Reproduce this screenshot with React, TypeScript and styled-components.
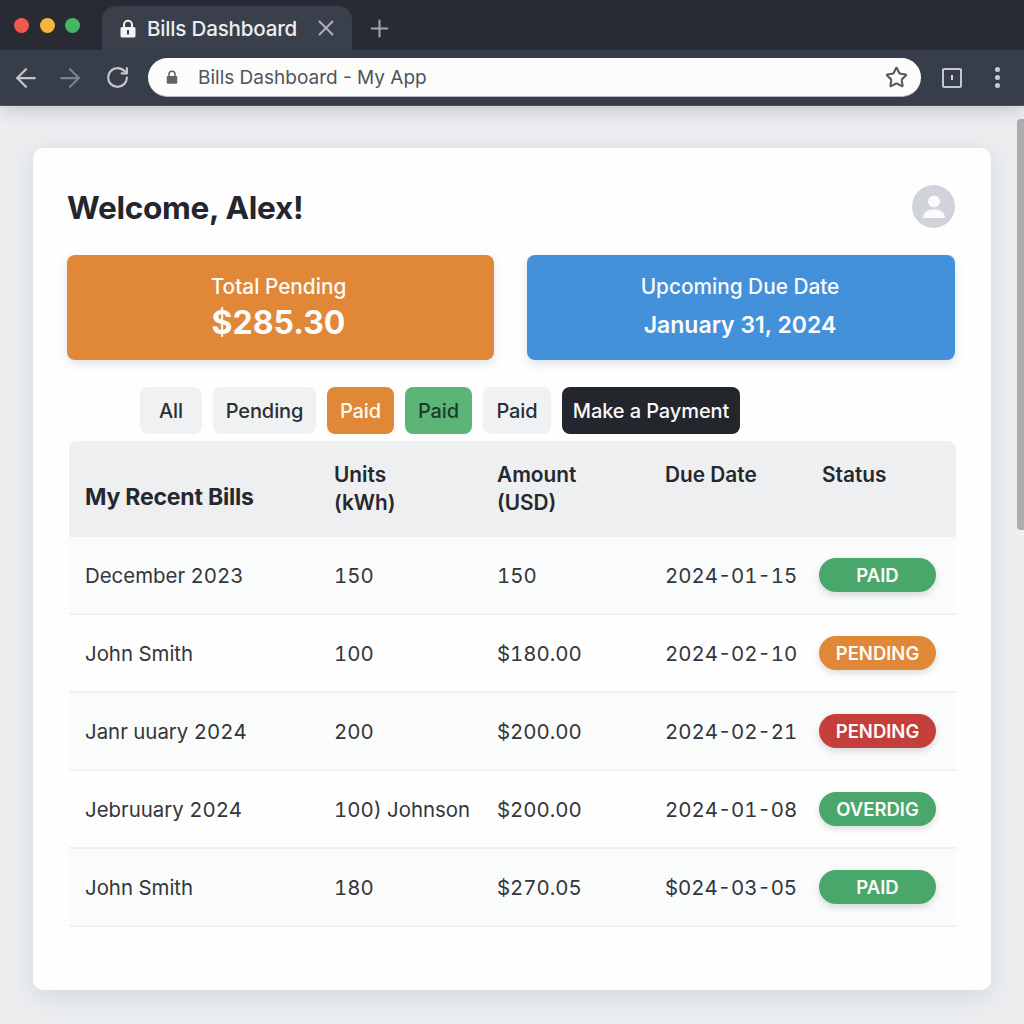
import React from "react";
import styled, { createGlobalStyle } from "styled-components";
import { ArrowLeft, ArrowRight, RotateCw, Star, X, Plus } from "lucide-react";

const Global = createGlobalStyle`
  html, body { margin: 0; padding: 0; height: 1024px; overflow: hidden; background: #eceef0; }
  * { box-sizing: border-box; }
  body { font-family: Inter, "Liberation Sans", sans-serif; color: #25282e; }
`;

const Screen = styled.div`
  position: relative;
  width: 1024px;
  height: 1024px;
  display: flex;
  flex-direction: column;
  background: #eceef0;
`;

const Chrome = styled.header`
  position: relative;
  z-index: 1;
  flex: none;
  box-shadow: 0 3px 18px rgba(40, 45, 55, 0.24);
`;

const TabStrip = styled.div`
  height: 50px;
  background: #282b34;
  display: flex;
  align-items: flex-end;
  padding-left: 14px;
`;

const Lights = styled.div`
  display: flex;
  gap: 10.500px;
  align-self: flex-start;
  margin-top: 18px;
  width: 88px;
`;

const Light = styled.span<{ $c: string }>`
  width: 15px;
  height: 15px;
  border-radius: 50%;
  background: ${(p) => p.$c};
`;

const Tab = styled.div`
  width: 250px;
  height: 44px;
  border-radius: 14px 14px 0 0;
  background: #393f4b;
  display: flex;
  align-items: center;
  padding: 0 13px 0 18px;
  color: #eceef0;
  font-size: 20.6px;
  font-weight: 500;
  letter-spacing: -0.2px;
`;

const TabTitle = styled.span`
  margin-left: 11px;
  flex: 1;
  white-space: nowrap;
`;

const NewTab = styled.span`
  display: flex;
  margin-left: 14px;
  margin-bottom: 8px;
  color: #a2a6ae;
`;

const Toolbar = styled.div`
  height: 56px;
  background: #383e49;
  border-bottom: 1px solid #4a505b;
  display: flex;
  align-items: center;
  padding: 0 0 0 11px;
`;

const NavIcon = styled.span<{ $c: string; $w: number }>`
  display: flex;
  justify-content: center;
  width: ${(p) => p.$w}px;
  color: ${(p) => p.$c};
`;

const Address = styled.div`
  width: 773px;
  height: 39px;
  margin-left: 13px;
  border-radius: 20px;
  background: #fcfcfb;
  border-bottom: 1px solid #b8bbc0;
  display: flex;
  align-items: center;
  padding: 0 13px 0 18px;
  color: #50545b;
  font-size: 19px;
`;

const AddressText = styled.span`
  flex: 1;
  margin-left: 20px;
  white-space: nowrap;
`;

const ExtBox = styled.span`
  width: 20px;
  height: 20px;
  margin-left: 21px;
  border: 2px solid #c5c8cc;
  border-radius: 2px;
  display: flex;
  align-items: center;
  justify-content: center;
  &::after {
    content: "";
    width: 2px;
    height: 5px;
    background: #d5d7da;
  }
`;

const Dots = styled.span`
  margin-left: 33px;
  display: flex;
  flex-direction: column;
  gap: 3px;
`;

const Dot = styled.span`
  width: 5px;
  height: 5px;
  border-radius: 50%;
  background: #c8cbd0;
`;

const Main = styled.main`
  flex: 1;
  padding: 42px 33px 34px;
`;

const Card = styled.section`
  width: 958px;
  height: 842px;
  background: #fefefe;
  border-radius: 10px;
  padding: 37px 36px 0 34px;
  box-shadow: 0 6px 26px rgba(90, 100, 120, 0.16);
`;

const Head = styled.div`
  display: flex;
  justify-content: space-between;
  align-items: center;
  height: 43px;
`;

const Welcome = styled.h1`
  margin: 2px 0 0;
  font-size: 31.6px;
  font-weight: 700;
  letter-spacing: -0.3px;
  color: #23262c;
`;

const Avatar = styled.span`
  width: 43px;
  height: 43px;
  border-radius: 50%;
  background: #d0d3da;
  display: flex;
  align-items: center;
  justify-content: center;
`;

const Stats = styled.div`
  display: grid;
  grid-template-columns: 427px 428px;
  justify-content: space-between;
  margin-top: 27px;
`;

const Stat = styled.div<{ $bg: string; $shift: number }>`
  height: 105px;
  border-radius: 8px;
  background: ${(p) => p.$bg};
  color: #fbfbfb;
  display: flex;
  flex-direction: column;
  align-items: center;
  padding: 18px ${(p) => p.$shift}px 0 0;
  box-shadow: 0 4px 10px rgba(90, 100, 120, 0.18);
`;

const StatLabel = styled.div`
  font-size: 20.8px;
  font-weight: 500;
  line-height: 28px;
`;

const StatValue = styled.div<{ $big?: boolean }>`
  font-size: ${(p) => (p.$big ? 32 : 23)}px;
  font-weight: ${(p) => (p.$big ? 700 : 600)};
  line-height: 40px;
  margin-top: ${(p) => (p.$big ? 2 : 4)}px;
`;

const Filters = styled.div`
  display: flex;
  gap: 11px;
  margin-top: 27px;
  padding-left: 73px;
`;

const Filter = styled.button<{ $bg: string; $fg: string; $w: number }>`
  width: ${(p) => p.$w}px;
  height: 47px;
  border: 0;
  border-radius: 8px;
  background: ${(p) => p.$bg};
  color: ${(p) => p.$fg};
  font-family: inherit;
  font-size: 20px;
  font-weight: 500;
  padding: 0;
  letter-spacing: -0.1px;
  white-space: nowrap;
`;

const Table = styled.div`
  margin-top: 7px;
  margin-left: 2px;
  width: 887px;
`;

const columns = "265px 163px 168px 154px 1fr";

const HeadRow = styled.div`
  display: grid;
  grid-template-columns: ${columns};
  height: 96px;
  background: #eeeff1;
  border-radius: 8px 8px 0 0;
  font-weight: 600;
  font-size: 20.8px;
  line-height: 28px;
  color: #25282e;
`;

const HeadTitle = styled.div`
  align-self: center;
  padding: 16px 0 0 16px;
  font-size: 23px;
  font-weight: 700;
  letter-spacing: -0.2px;
`;

const HeadCell = styled.div<{ $inset?: number }>`
  padding: 20px 0 0 ${(p) => p.$inset ?? 0}px;
`;

const Row = styled.div<{ $alt: boolean }>`
  display: grid;
  grid-template-columns: ${columns};
  align-items: center;
  height: 78px;
  background: ${(p) => (p.$alt ? "#fafbfb" : "#fefefe")};
  border-bottom: 2px solid #eef0f3;
  font-size: 20.4px;
  font-variant-numeric: tabular-nums;
  color: #33363c;
`;

const NameCell = styled.div`
  padding-left: 16px;
  white-space: nowrap;
`;

const Cell = styled.div`
  white-space: nowrap;
`;

const Pill = styled.span<{ $bg: string }>`
  display: flex;
  align-items: center;
  justify-content: center;
  width: 117px;
  height: 34px;
  border-radius: 17px;
  background: ${(p) => p.$bg};
  color: #fbfbf8;
  font-size: 18.5px;
  font-weight: 600;
  box-shadow: 0 3px 7px rgba(80, 90, 100, 0.22);
`;

const Scrollbar = styled.div`
  position: absolute;
  top: 119px;
  right: 0;
  width: 7px;
  height: 411px;
  border-radius: 4px 0 0 4px;
  background: #acadaf;
`;

const GREEN = "#4aa76c";
const ORANGE = "#e18838";
const RED = "#c43f3b";

const rows = [
  ["December 2023", "150", "150", "2024-01-15", "PAID", GREEN],
  ["John Smith", "100", "$180.00", "2024-02-10", "PENDING", ORANGE],
  ["Janr uuary 2024", "200", "$200.00", "2024-02-21", "PENDING", RED],
  ["Jebruuary 2024", "100) Johnson", "$200.00", "2024-01-08", "OVERDIG", GREEN],
  ["John Smith", "180", "$270.05", "$024-03-05", "PAID", GREEN],
];

const filters = [
  ["All", "#f0f1f3", "#2b2e34", 62],
  ["Pending", "#f0f1f3", "#2b2e34", 103],
  ["Paid", ORANGE, "#fbfbf8", 67],
  ["Paid", "#5cb577", "#1f3a2a", 67],
  ["Paid", "#f0f1f3", "#2b2e34", 68],
  ["Make a Payment", "#24262e", "#fafafa", 178],
] as const;

const Lock = ({ c, w, h }: { c: string; w: number; h: number }) => (
  <svg width={w} height={h} viewBox="0 0 16 19" fill="none">
    <path d="M4 9V5.800a4 4 0 0 1 8 0V9" stroke={c} strokeWidth="2" />
    <rect x="1" y="8" width="14" height="10.500" rx="1.500" fill={c} />
  </svg>
);

const TabLock = () => (
  <svg width="16" height="19" viewBox="0 0 16 19" fill="none">
    <path d="M4 9V5.800a4 4 0 0 1 8 0V9" stroke="#f2f2f2" strokeWidth="2" />
    <rect x="0.500" y="8" width="15" height="10.500" rx="1.500" fill="#f2f2f2" />
    <rect x="7" y="11" width="2" height="4.500" fill="#393f4b" />
  </svg>
);

export default function App() {
  return (
    <Screen>
      <Global />
      <Chrome>
        <TabStrip>
          <Lights>
            <Light $c="#ee5a50" />
            <Light $c="#f6b53d" />
            <Light $c="#45b760" />
          </Lights>
          <Tab>
            <TabLock />
            <TabTitle>Bills Dashboard</TabTitle>
            <X size={26} color="#aeb1b7" strokeWidth={1.800} />
          </Tab>
          <NewTab>
            <Plus size={27} strokeWidth={1.800} />
          </NewTab>
        </TabStrip>
        <Toolbar>
          <NavIcon $c="#c3c6cb" $w={30}>
            <ArrowLeft size={30} strokeWidth={1.800} />
          </NavIcon>
          <NavIcon $c="#7c818a" $w={58}>
            <ArrowRight size={30} strokeWidth={1.800} />
          </NavIcon>
          <NavIcon $c="#c3c6cb" $w={36}>
            <RotateCw size={25} strokeWidth={2.100} />
          </NavIcon>
          <Address>
            <Lock c="#5d6168" w={12} h={16} />
            <AddressText>Bills Dashboard - My App</AddressText>
            <Star size={23} color="#555a62" strokeWidth={2.200} />
          </Address>
          <ExtBox />
          <Dots>
            <Dot />
            <Dot />
            <Dot />
          </Dots>
        </Toolbar>
      </Chrome>
      <Main>
        <Card>
          <Head>
            <Welcome>Welcome, Alex!</Welcome>
            <Avatar>
              <svg width="24" height="26" viewBox="0 0 24 26">
                <circle cx="12" cy="7.500" r="6" fill="#fbfbfb" />
                <path d="M1 24c0-6 5-8.500 11-8.500s11 2.500 11 8.500z" fill="#fbfbfb" />
              </svg>
            </Avatar>
          </Head>
          <Stats>
            <Stat $bg={ORANGE} $shift={4}>
              <StatLabel>Total Pending</StatLabel>
              <StatValue $big>$285.30</StatValue>
            </Stat>
            <Stat $bg="#4391db" $shift={2}>
              <StatLabel>Upcoming Due Date</StatLabel>
              <StatValue>January 31, 2024</StatValue>
            </Stat>
          </Stats>
          <Filters>
            {filters.map(([label, bg, fg, w], i) => (
              <Filter key={i} $bg={bg} $fg={fg} $w={w}>
                {label}
              </Filter>
            ))}
          </Filters>
          <Table>
            <HeadRow>
              <HeadTitle>My Recent Bills</HeadTitle>
              <HeadCell>
                Units
                <br />
                (kWh)
              </HeadCell>
              <HeadCell>
                Amount
                <br />
                (USD)
              </HeadCell>
              <HeadCell>Due Date</HeadCell>
              <HeadCell $inset={3}>Status</HeadCell>
            </HeadRow>
            {rows.map((r, i) => (
              <Row key={i} $alt={i % 2 === 0}>
                <NameCell>{r[0]}</NameCell>
                <Cell>{r[1]}</Cell>
                <Cell>{r[2]}</Cell>
                <Cell>{r[3]}</Cell>
                <Pill $bg={r[5]}>{r[4]}</Pill>
              </Row>
            ))}
          </Table>
        </Card>
      </Main>
      <Scrollbar />
    </Screen>
  );
}
